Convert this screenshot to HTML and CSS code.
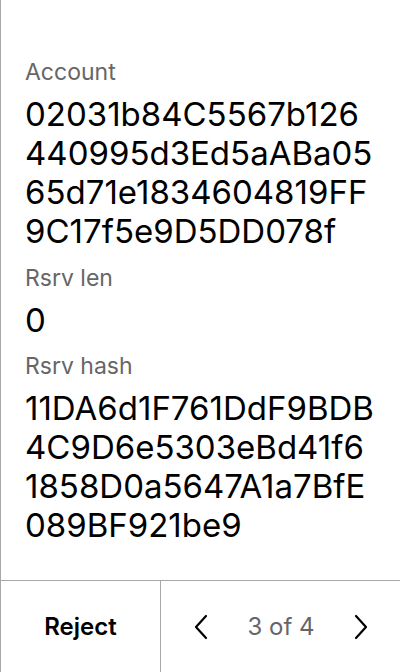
FILE: index.html
```html
<!DOCTYPE html>
<html>
<head>
<meta charset="utf-8">
<link rel="stylesheet" href="styles.css">
</head>
<body>
<div class="screen">
  <main class="content">
    <div class="field">
      <div class="label">Account</div>
      <div class="value">02031b84C5567b126<br>440995d3Ed5aABa05<br>65d71e1834604819FF<br>9C17f5e9D5DD078f</div>
    </div>
    <div class="field">
      <div class="label">Rsrv len</div>
      <div class="value">0</div>
    </div>
    <div class="field">
      <div class="label">Rsrv hash</div>
      <div class="value">11DA6d1F761DdF9BDB<br>4C9D6e5303eBd41f6<br>1858D0a5647A1a7BfE<br>089BF921be9</div>
    </div>
  </main>
  <footer class="footer">
    <div class="reject">Reject</div>
    <div class="pager">
      <svg class="chev" width="16" height="26" viewBox="0 0 16 26"><path d="M13 2 L3 13 L13 24" fill="none" stroke="#000" stroke-width="2.2" stroke-linecap="round" stroke-linejoin="round"/></svg>
      <span class="count">3 of 4</span>
      <svg class="chev" width="16" height="26" viewBox="0 0 16 26"><path d="M3 2 L13 13 L3 24" fill="none" stroke="#000" stroke-width="2.2" stroke-linecap="round" stroke-linejoin="round"/></svg>
    </div>
  </footer>
</div>
</body>
</html>
```
FILE: styles.css
```css
* { box-sizing: border-box; }
html, body { margin: 0; padding: 0; background: #fff; }
body { font-family: Inter, "Noto Sans", sans-serif; color: #000; }
.screen {
  width: 400px;
  height: 672px;
  border-left: 1px solid #a8a8a8;
  display: flex;
  flex-direction: column;
}
.content {
  flex: 1;
  padding: 58px 0 0 24px;
  display: flex;
  flex-direction: column;
  gap: 12.5px;
}
.field { display: flex; flex-direction: column; gap: 9px; }
.label { font-size: 23px; line-height: 28px; color: #666; }
.value { font-size: 33px; line-height: 39px; color: #000; }
.footer {
  height: 92px;
  border-top: 1px solid #a8a8a8;
  display: flex;
}
.reject {
  width: 160px;
  border-right: 1px solid #a8a8a8;
  display: flex;
  align-items: center;
  justify-content: center;
  font-size: 24px;
  font-weight: 600;
}
.pager {
  flex: 1;
  display: flex;
  align-items: center;
  justify-content: space-between;
  padding: 0 31px 0 32px;
}
.count { font-size: 24px; color: #666; }
.chev { display: block; }
```
